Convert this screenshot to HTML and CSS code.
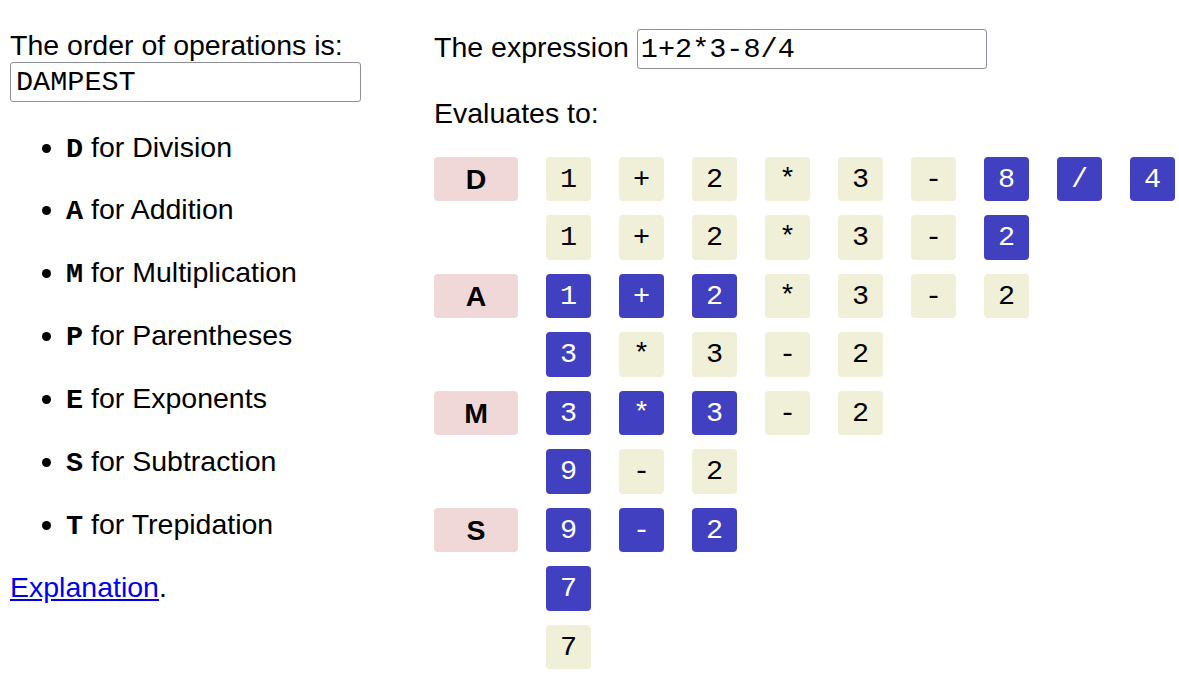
FILE: index.html
```html
<!DOCTYPE html>
<html lang="en">
<head>
<meta charset="utf-8">
<title>Order of operations</title>
<link rel="stylesheet" href="styles.css">
</head>
<body>
<div class="page">
  <div class="left">
    <label class="order-label" for="order">The order of operations is:</label>
    <input id="order" class="order-input" type="text" value="DAMPEST">
    <ul class="ops">
      <li><b class="key">D</b> for Division</li>
      <li><b class="key">A</b> for Addition</li>
      <li><b class="key">M</b> for Multiplication</li>
      <li><b class="key">P</b> for Parentheses</li>
      <li><b class="key">E</b> for Exponents</li>
      <li><b class="key">S</b> for Subtraction</li>
      <li><b class="key">T</b> for Trepidation</li>
    </ul>
    <p class="explain"><a href="#">Explanation</a>.</p>
  </div>
  <div class="right">
    <div class="expr-line">
      <label for="expr">The expression</label>
      <input id="expr" class="expr-input" type="text" value="1+2*3-8/4">
    </div>
    <p class="evaluates">Evaluates to:</p>
    <div class="steps">
      <div class="step-row">
        <span class="op-label">D</span>
        <span class="tok">1</span><span class="tok">+</span><span class="tok">2</span><span class="tok">*</span><span class="tok">3</span><span class="tok">-</span><span class="tok on">8</span><span class="tok on">/</span><span class="tok on">4</span>
      </div>
      <div class="step-row">
        <span class="op-label blank"></span>
        <span class="tok">1</span><span class="tok">+</span><span class="tok">2</span><span class="tok">*</span><span class="tok">3</span><span class="tok">-</span><span class="tok on">2</span>
      </div>
      <div class="step-row">
        <span class="op-label">A</span>
        <span class="tok on">1</span><span class="tok on">+</span><span class="tok on">2</span><span class="tok">*</span><span class="tok">3</span><span class="tok">-</span><span class="tok">2</span>
      </div>
      <div class="step-row">
        <span class="op-label blank"></span>
        <span class="tok on">3</span><span class="tok">*</span><span class="tok">3</span><span class="tok">-</span><span class="tok">2</span>
      </div>
      <div class="step-row">
        <span class="op-label">M</span>
        <span class="tok on">3</span><span class="tok on">*</span><span class="tok on">3</span><span class="tok">-</span><span class="tok">2</span>
      </div>
      <div class="step-row">
        <span class="op-label blank"></span>
        <span class="tok on">9</span><span class="tok">-</span><span class="tok">2</span>
      </div>
      <div class="step-row">
        <span class="op-label">S</span>
        <span class="tok on">9</span><span class="tok on">-</span><span class="tok on">2</span>
      </div>
      <div class="step-row">
        <span class="op-label blank"></span>
        <span class="tok on">7</span>
      </div>
      <div class="step-row">
        <span class="op-label blank"></span>
        <span class="tok">7</span>
      </div>
    </div>
  </div>
</div>
</body>
</html>
```
FILE: styles.css
```css
html, body {
  margin: 0;
  padding: 0;
  background: #ffffff;
}

body {
  font-family: "Liberation Sans", Arial, sans-serif;
  font-size: 28.5px;
  color: #000000;
  line-height: normal;
}

.page {
  display: flex;
  align-items: flex-start;
  padding: 29px 0 0 10px;
}

.left {
  width: 424px;
  flex: none;
  display: flex;
  flex-direction: column;
  align-items: flex-start;
}

.order-label {
  display: block;
}

input {
  box-sizing: border-box;
  font-family: "Liberation Mono", "Courier New", monospace;
  font-size: 28.5px;
  color: #000000;
  border: 1px solid #8f8f9d;
  border-radius: 3px;
  background: #ffffff;
  padding: 0 3px;
  margin: 0;
}

.order-input {
  width: 351px;
  height: 40px;
  padding-left: 5px;
}

.ops {
  margin: 28.5px 0 0 0;
  padding: 0 0 0 56px;
}

.ops li {
  margin: 0;
}

.ops li + li {
  margin-top: 27.9px;
}

.key {
  font-family: "Liberation Mono", "Courier New", monospace;
  font-weight: bold;
}

.explain {
  margin: 28px 0 0 0;
}

.explain a {
  color: #0000ee;
  text-decoration: underline;
}

.right {
  flex: 1;
  display: flex;
  flex-direction: column;
}

.expr-line {
  display: flex;
  align-items: baseline;
  gap: 8px;
}

.expr-input {
  width: 350px;
  height: 40px;
}

.evaluates {
  margin: 27.5px 0 27.5px 0;
}

.steps {
  display: flex;
  flex-direction: column;
  gap: 14.2px;
}

.step-row {
  display: flex;
  gap: 28px;
}

.op-label,
.tok {
  height: 44.3px;
  border-radius: 4px;
  display: flex;
  align-items: center;
  justify-content: center;
  flex: none;
}

.op-label {
  width: 84px;
  background: #f0d8d8;
  font-weight: bold;
}

.op-label.blank {
  background: transparent;
}

.tok {
  width: 45px;
  background: #f0f0d8;
  font-family: "Liberation Mono", "Courier New", monospace;
}

.tok.on {
  background: #4040c0;
  color: #ffffff;
}
```
